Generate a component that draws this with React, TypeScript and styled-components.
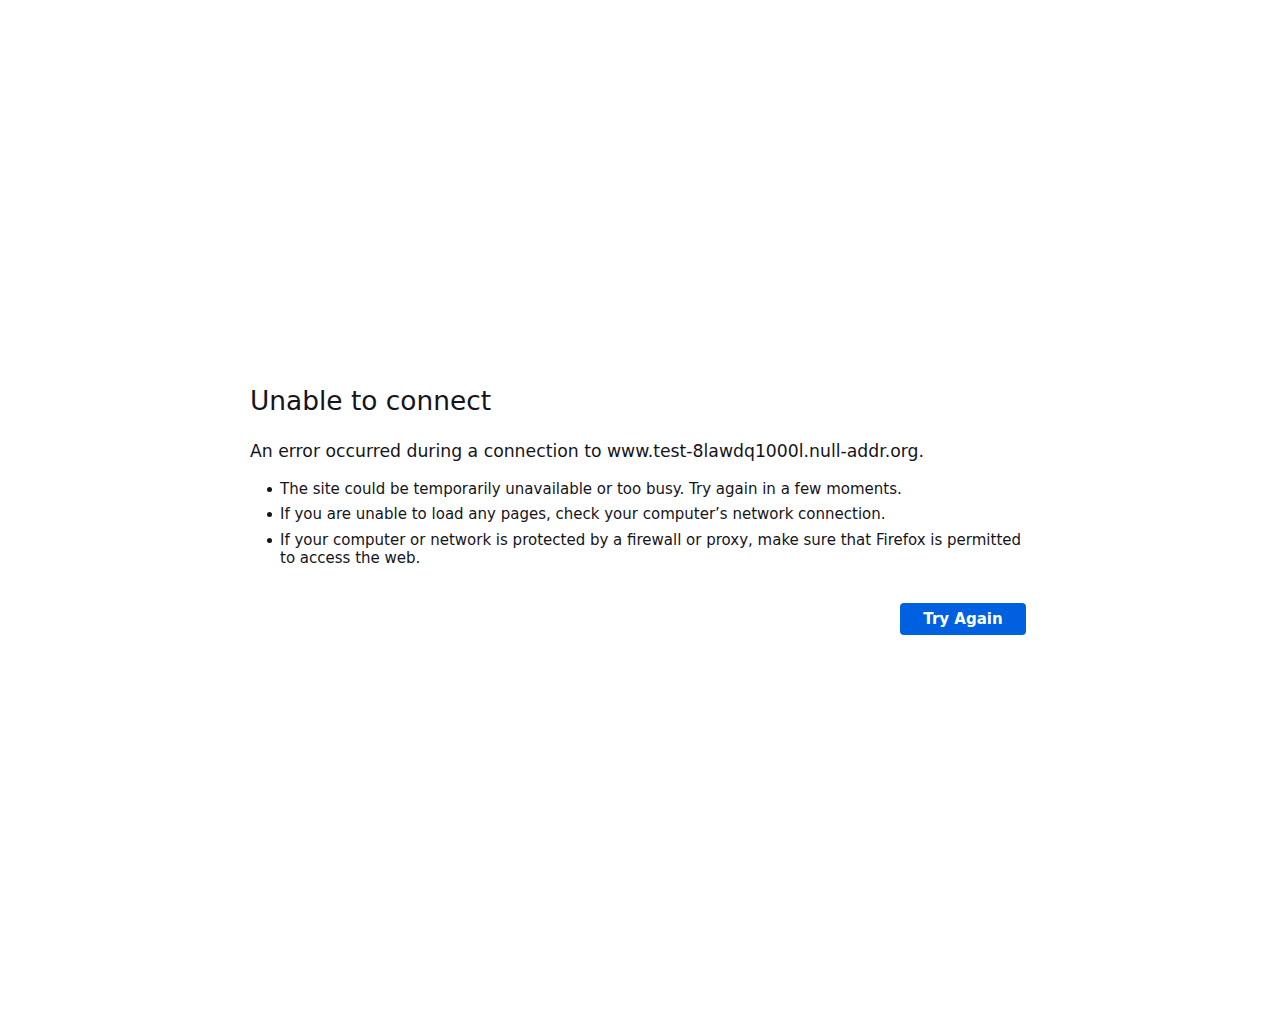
import styled, { createGlobalStyle } from 'styled-components';

const GlobalStyle = createGlobalStyle`
  html, body {
    margin: 0;
    padding: 0;
    background: #ffffff;
  }
  body {
    font-family: "DejaVu Sans", sans-serif;
    color: #15141a;
    font-size: 15px;
  }
`;

const Page = styled.main`
  min-height: 100vh;
  display: flex;
  align-items: center;
  justify-content: center;
  box-sizing: border-box;
  padding-bottom: 4px;
`;

const Container = styled.div`
  width: 780px;
  display: flex;
  flex-direction: column;
`;

const Title = styled.h1`
  font-size: 26.4px;
  font-weight: 400;
  line-height: 1.2;
  margin: 0 0 22px 0;
`;

const Description = styled.p`
  font-size: 17.25px;
  line-height: 1.4;
  margin: 0 0 17px 0;
`;

const List = styled.ul`
  margin: 0;
  padding: 0 0 0 30px;
  font-size: 15px;
  line-height: 18px;
  list-style: none;
`;

const Item = styled.li`
  position: relative;
  margin: 0 0 7.5px 0;

  &::before {
    content: '';
    position: absolute;
    left: -13px;
    top: 7px;
    width: 5px;
    height: 5px;
    border-radius: 50%;
    background: #15141a;
  }
`;

const Actions = styled.div`
  display: flex;
  justify-content: flex-end;
  margin-top: 29px;
  padding-right: 4px;
`;

const Button = styled.button`
  background: #0061e0;
  color: #ffffff;
  border: none;
  border-radius: 4px;
  height: 32px;
  width: 126px;
  padding: 0;
  font-family: "DejaVu Sans", sans-serif;
  font-weight: 700;
  font-size: 15px;
  cursor: pointer;
`;

export default function App() {
  return (
    <>
      <GlobalStyle />
      <Page>
        <Container>
          <Title>Unable to connect</Title>
          <Description>
            An error occurred during a connection to www.test-8lawdq1000l.null-addr.org.
          </Description>
          <List>
            <Item>The site could be temporarily unavailable or too busy. Try again in a few moments.</Item>
            <Item>If you are unable to load any pages, check your computer’s network connection.</Item>
            <Item>If your computer or network is protected by a firewall or proxy, make sure that Firefox is permitted to access the web.</Item>
          </List>
          <Actions>
            <Button>Try Again</Button>
          </Actions>
        </Container>
      </Page>
    </>
  );
}
